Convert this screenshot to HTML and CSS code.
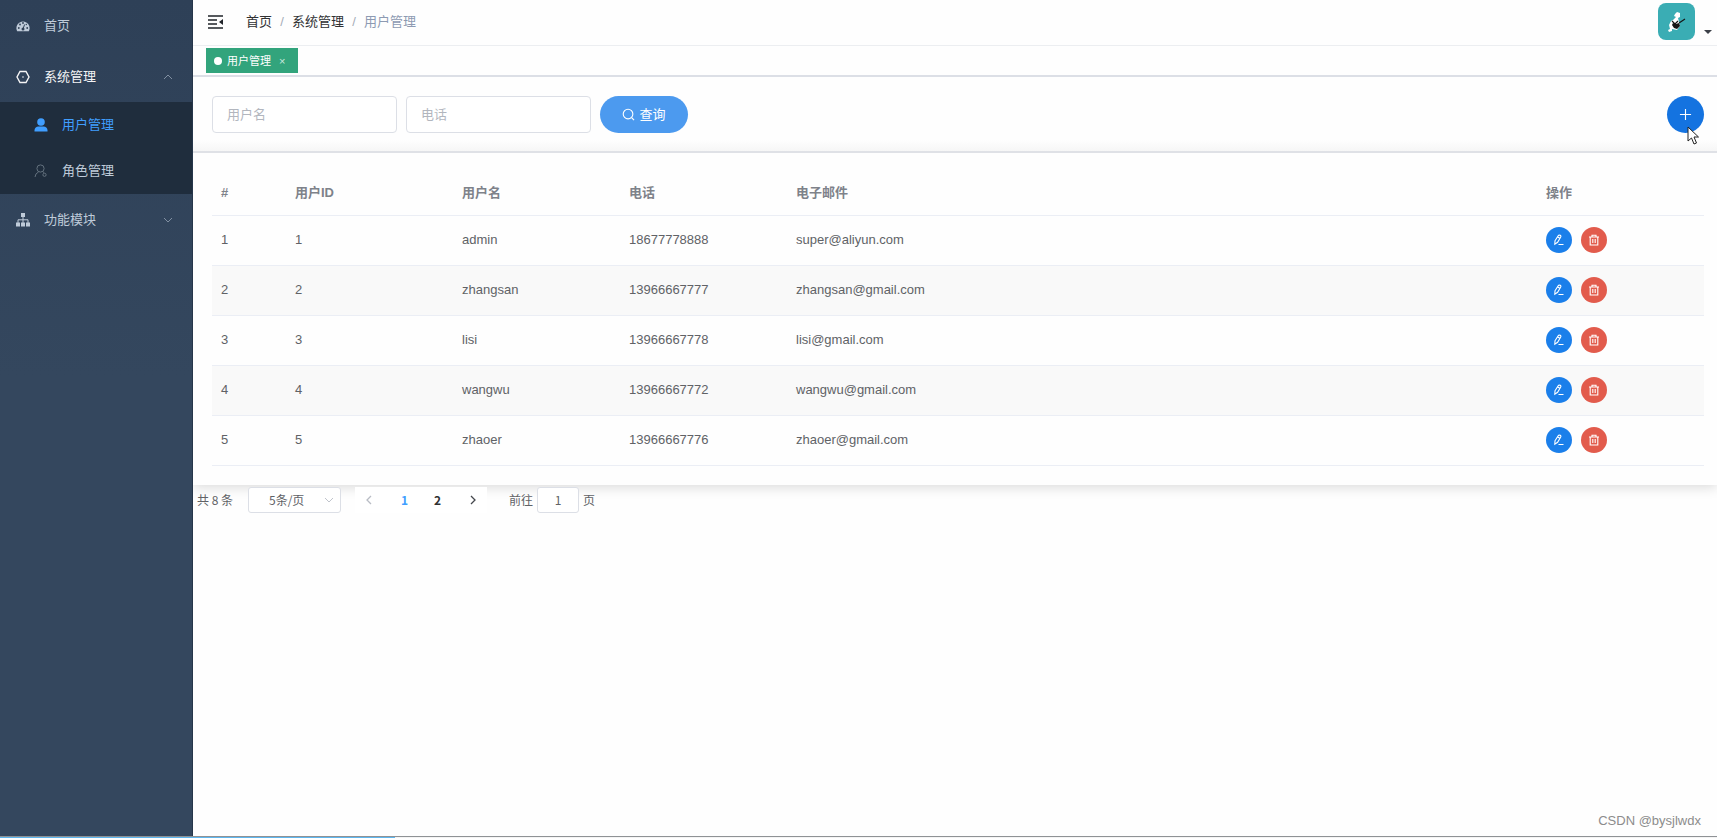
FILE: index.html
```html
<!DOCTYPE html>
<html lang="zh-CN">
<head>
<meta charset="utf-8">
<title>用户管理</title>
<link rel="stylesheet" href="styles.css">
</head>
<body>
<svg class="defs" aria-hidden="true">
  <symbol id="edit" viewBox="0 0 12 12"><path d="M2 6.800 5 2Q6 .6 7.200 1.300T7.600 3.300L4.600 8.300 1.800 10.200ZM4.500 2.900l2.400 1.400M5.500 10.500h5"/></symbol>
  <symbol id="trash" viewBox="0 0 12 12"><path d="M1 3h10M4 3V1.200h4V3M2.200 3v8h7.600V3M4.800 5v4M7.200 5v4"/></symbol>
</svg>
<div class="app">
  <nav class="sidebar">
    <a class="item" href="#">
      <svg class="icon" viewBox="0 0 14 14"><path d="M1.200 12.300A6.600 6.600 0 1 1 12.800 12.300Z" fill="#bfcbd9"/><g fill="#304156"><circle cx="2.800" cy="9" r=".9"/><circle cx="4" cy="5.500" r=".9"/><circle cx="7" cy="4" r=".9"/><circle cx="11.200" cy="9" r=".9"/><circle cx="10.300" cy="5.500" r=".7"/><circle cx="7" cy="10" r="1.500"/></g><path d="M7 10 8.600 5.500" stroke="#304156"/></svg>
      <span>首页</span>
    </a>
    <button class="item open" type="button" aria-expanded="true">
      <svg class="icon" viewBox="0 0 14 14" fill="none" stroke="#f4f4f5" stroke-width="1.400"><path d="M4 1.500h6L13 7l-3 5.500H4L1 7Z"/><circle cx="7" cy="7" r=".8" fill="#f4f4f5" stroke="none"/></svg>
      <span>系统管理</span>
      <svg class="chevron" viewBox="0 0 10 10"><path d="M1 7 5 3l4 4"/></svg>
    </button>
    <div class="submenu">
      <a class="item sub active" href="#">
        <svg class="icon" viewBox="0 0 14 14" fill="#409eff"><circle cx="7" cy="4" r="3.800"/><path d="M.5 13.500V12Q1 8.500 4.500 8.500h5Q13 8.500 13.500 12v1.500Z"/></svg>
        <span>用户管理</span>
      </a>
      <a class="item sub" href="#">
        <svg class="icon" viewBox="0 0 14 14" fill="none" stroke="#63717e"><circle cx="6.500" cy="4.500" r="3.600"/><path d="M1 13Q1.200 9.500 4.700 7.800M8.500 7.500l1.700 1.200"/><circle cx="10.500" cy="10.800" r="1.600"/></svg>
        <span>角色管理</span>
      </a>
    </div>
    <button class="item" type="button" aria-expanded="false">
      <svg class="icon" viewBox="0 0 14 14" fill="#bfcbd9"><path d="M5 0h4v4H5ZM0 9.500h4v4H0ZM5 9.500h4v4H5ZM10 9.500h4v4h-4Z"/><path d="M7 4v6M2 10V6.800h10V10" fill="none" stroke="#bfcbd9"/></svg>
      <span>功能模块</span>
      <svg class="chevron" viewBox="0 0 10 10"><path d="m1 3 4 4 4-4"/></svg>
    </button>
  </nav>

  <div class="main">
    <header class="navbar">
      <button class="fold" type="button" aria-label="收起菜单">
        <svg viewBox="0 0 16 14"><path d="M0 1h15M0 5h9M0 9h9M0 13h15" stroke="#1f2329" stroke-width="1.600"/><path d="M15 4v6l-4-3Z" fill="#1f2329"/></svg>
      </button>
      <nav class="breadcrumb"><a href="#">首页</a><i>/</i><a href="#">系统管理</a><i>/</i><span>用户管理</span></nav>
      <button class="account" type="button" aria-label="账户">
        <svg class="avatar" viewBox="0 0 37 37"><rect width="37" height="37" rx="8" fill="#3aadb4"/><path d="m17 11 2-2 3 1v4l-2 1 1 4 1 4-3 4-5-1v2l-3 1-1-2 2-1-1-4 2-4 2-1 3-3-2-1Z" fill="#fff"/><path d="m21 20 6-4M14 18l3 3 3-3" stroke="#151515" stroke-width="1.200" fill="none"/><path d="m15 20 3 1 3-1 1 3-3 3-3-1-2-3Z" fill="#151515"/></svg>
        <span class="caret"></span>
      </button>
    </header>
    <div class="tags"><a class="tag" href="#"><span class="dot"></span>用户管理<span class="close">×</span></a></div>

    <form class="search">
      <input class="field" type="text" placeholder="用户名" aria-label="用户名">
      <input class="field" type="text" placeholder="电话" aria-label="电话">
      <button class="query" type="button"><svg viewBox="0 0 14 14"><circle cx="6.500" cy="6.500" r="5.200"/><path d="m10.500 10.500 2.500 2.500"/></svg>查询</button>
      <div class="adder">
        <button class="add" type="button" aria-label="新增"><svg viewBox="0 0 14 14"><path d="M7 1v12M1 7h12"/></svg></button>
        <svg class="cursor" viewBox="0 0 12 19"><path d="M1 1v14l3.500-3 2.500 6 2.500-1L7 11h4.500Z" fill="#fff" stroke="#222"/></svg>
      </div>
    </form>

    <section class="card">
      <table>
        <colgroup><col class="c-index"><col class="c-data"><col class="c-data"><col class="c-data"><col><col class="c-data"></colgroup>
        <thead><tr><th>#</th><th>用户ID</th><th>用户名</th><th>电话</th><th>电子邮件</th><th>操作</th></tr></thead>
        <tbody>
          <tr><td>1</td><td>1</td><td>admin</td><td>18677778888</td><td>super@aliyun.com</td><td><div class="ops"><button class="op" type="button" aria-label="编辑"><svg><use href="#edit"/></svg></button><button class="op del" type="button" aria-label="删除"><svg><use href="#trash"/></svg></button></div></td></tr>
          <tr><td>2</td><td>2</td><td>zhangsan</td><td>13966667777</td><td>zhangsan@gmail.com</td><td><div class="ops"><button class="op" type="button" aria-label="编辑"><svg><use href="#edit"/></svg></button><button class="op del" type="button" aria-label="删除"><svg><use href="#trash"/></svg></button></div></td></tr>
          <tr><td>3</td><td>3</td><td>lisi</td><td>13966667778</td><td>lisi@gmail.com</td><td><div class="ops"><button class="op" type="button" aria-label="编辑"><svg><use href="#edit"/></svg></button><button class="op del" type="button" aria-label="删除"><svg><use href="#trash"/></svg></button></div></td></tr>
          <tr><td>4</td><td>4</td><td>wangwu</td><td>13966667772</td><td>wangwu@gmail.com</td><td><div class="ops"><button class="op" type="button" aria-label="编辑"><svg><use href="#edit"/></svg></button><button class="op del" type="button" aria-label="删除"><svg><use href="#trash"/></svg></button></div></td></tr>
          <tr><td>5</td><td>5</td><td>zhaoer</td><td>13966667776</td><td>zhaoer@gmail.com</td><td><div class="ops"><button class="op" type="button" aria-label="编辑"><svg><use href="#edit"/></svg></button><button class="op del" type="button" aria-label="删除"><svg><use href="#trash"/></svg></button></div></td></tr>
        </tbody>
      </table>
    </section>

    <div class="pagination">
      <span class="total">共 8 条</span>
      <div class="size"><select aria-label="每页条数"><option>5条/页</option></select><svg viewBox="0 0 10 10"><path d="m1 3 4 4 4-4"/></svg></div>
      <div class="pager">
        <button class="prev" type="button" aria-label="上一页" disabled><svg viewBox="0 0 10 10"><path d="M7 1 3 5l4 4"/></svg></button>
        <button class="current" type="button">1</button>
        <button type="button">2</button>
        <button class="next" type="button" aria-label="下一页"><svg viewBox="0 0 10 10"><path d="m3 1 4 4-4 4"/></svg></button>
      </div>
      <label class="jump">前往<input type="text" value="1">页</label>
    </div>
    <footer class="watermark">CSDN @bysjlwdx</footer>
  </div>
</div>
<div class="progress"><div class="played"></div></div>
</body>
</html>
```
FILE: styles.css
```css
* { box-sizing: border-box; }
body {
  margin: 0;
  min-height: 100vh;
  display: flex;
  flex-direction: column;
  background: #fefefe;
  color: #606266;
  font: 13px/20px "Liberation Sans", "Noto Sans CJK SC", sans-serif;
}
button, input, select { font: inherit; color: inherit; margin: 0; padding: 0; border: 0; background: none; }
a { color: inherit; text-decoration: none; }
svg { display: block; flex: none; }
.defs { position: absolute; width: 0; height: 0; }
.app { display: flex; flex: 1; }

.sidebar {
  width: 193px;
  flex: none;
  background: linear-gradient(#2e4057, #34475e 45%, #34475e);
  border-right: 1px solid #26364a;
}
.item {
  display: flex;
  align-items: center;
  gap: 14px;
  width: 100%;
  height: 51px;
  padding: 0 19px 0 16px;
  color: #bfcbd9;
  text-align: left;
}
.open { color: #f4f4f5; }
.icon { width: 14px; height: 14px; }
.chevron { width: 10px; height: 10px; margin-left: auto; fill: none; stroke: #8190a2; }
.submenu { background: #1f2d3d; }
.sub { height: 46px; padding-left: 34px; }
.active { color: #409eff; }

.main { flex: 1; min-width: 0; display: flex; flex-direction: column; }
.navbar {
  display: flex;
  align-items: center;
  height: 46px;
  padding: 0 5px 2px 15px;
  border-bottom: 1px solid #eceef1;
}
.fold svg { width: 16px; height: 14px; }
.breadcrumb { display: flex; margin-left: 22px; color: #303133; }
.breadcrumb i { width: 20px; text-align: center; color: #a5acb8; font-style: normal; }
.breadcrumb span { color: #8d9ab2; }
.account { display: flex; align-items: flex-end; gap: 9px; margin-left: auto; }
.avatar { width: 37px; height: 37px; }
.caret { margin-bottom: 6px; border: 4px solid transparent; border-bottom: 0; border-top-color: #3c4048; }
.tags { height: 31px; padding: 2px 13px; border-bottom: 2px solid #dcdfe6; }
.tag {
  display: inline-flex;
  align-items: center;
  width: 92px;
  height: 25px;
  padding-left: 8px;
  background: #32a47c;
  color: #fff;
  font-size: 11px;
}
.dot { width: 8px; height: 8px; margin-right: 5px; border-radius: 50%; background: #fff; }
.close { margin-left: 8px; color: #c9e8dd; }

.search {
  display: flex;
  align-items: center;
  gap: 9px;
  padding: 19px 13px 18px 19px;
  border-bottom: 2px solid #dfe1e6;
  background: linear-gradient(#fefefe 85%, #f6f6f6);
}
.field { width: 185px; height: 37px; padding: 0 14px; border: 1px solid #dcdfe6; border-radius: 4px; background: #fff; }
.field::placeholder { color: #b2b6be; opacity: 1; }
.query {
  display: flex;
  align-items: center;
  justify-content: center;
  gap: 4px;
  width: 88px;
  height: 37px;
  border-radius: 20px;
  background: #4c9aef;
  color: #fff;
}
.query svg { width: 13px; height: 13px; fill: none; stroke: #fff; stroke-width: 1.2; }
.adder { position: relative; margin-left: auto; }
.add { display: grid; place-items: center; width: 37px; height: 37px; border-radius: 50%; background: #1473e0; }
.add svg { width: 13px; height: 13px; stroke: #fff; stroke-width: 1.2; }
.cursor { position: absolute; left: 20px; top: 30px; width: 12px; height: 19px; }

.card { padding: 19px 13px 19px 19px; background: #fefefe; box-shadow: 0 2px 12px rgba(0, 0, 0, .15); clip-path: inset(0 0 -16px 0); }
table { width: 100%; table-layout: fixed; border-collapse: collapse; }
.c-index { width: 74px; }
.c-data { width: 167px; }
th, td { padding: 0 9px; text-align: left; border-bottom: 1px solid #ebeef5; }
th { height: 43px; color: #7e828a; }
td { height: 50px; }
tbody tr:nth-child(even) { background: #f9f9f9; }
.ops { display: flex; gap: 9px; }
.op { display: grid; place-items: center; width: 26px; height: 26px; border-radius: 50%; background: #1b7fea; }
.del { background: #e25b4c; }
.op svg { width: 12px; height: 12px; fill: none; stroke: #fff; stroke-width: 1.1; }

.pagination { display: flex; align-items: center; padding: 2px 4px; font-family: "Noto Sans CJK SC", sans-serif; font-size: 12px; z-index: 1; }
.total { width: 51px; }
.size { position: relative; width: 93px; }
.size select { width: 100%; height: 26px; padding-left: 20px; border: 1px solid #dcdfe6; border-radius: 3px; background: #fff; appearance: none; }
.size svg { position: absolute; right: 7px; top: 8px; width: 10px; height: 10px; fill: none; stroke: #c0c4cc; pointer-events: none; }
.pager { display: flex; align-items: center; margin-left: 14px; background: #fff; color: #303133; font-weight: 700; }
.pager button { display: grid; place-items: center; width: 33px; height: 26px; }
.pager .prev { padding-right: 5px; }
.pager .next { padding-left: 5px; }
.pager .current { color: #409eff; }
.pager svg { width: 10px; height: 10px; fill: none; stroke: #44474d; stroke-width: 1.3; }
.pager .prev svg { stroke: #b8bcc4; }
.jump { display: flex; align-items: center; gap: 4px; margin-left: 22px; }
.jump input { width: 42px; height: 26px; border: 1px solid #dcdfe6; border-radius: 3px; background: #fff; text-align: center; }
.watermark { margin-top: auto; padding: 0 16px 5px; text-align: right; font-size: 13px; color: #8c8c8c; }
.progress { height: 2px; border-top: 1px solid #8f9295; background: #f4f4f4; }
.played { width: 23%; height: 1px; background: #5eb6ee; }
```
